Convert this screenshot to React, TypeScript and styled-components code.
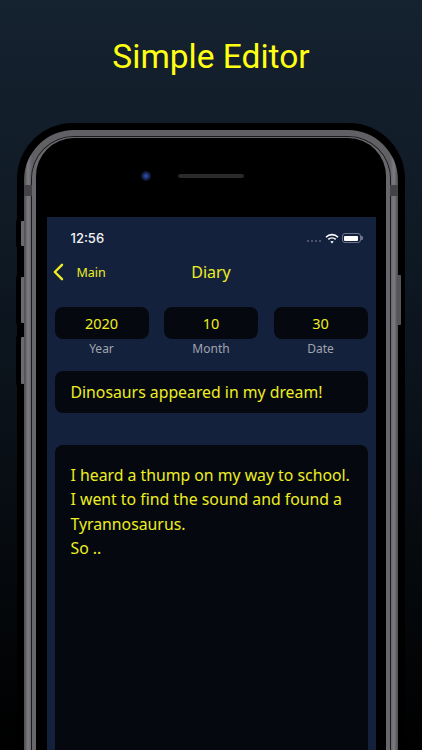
import styled, { createGlobalStyle } from "styled-components";

const lines = [
  "I heard a thump on my way to school.",
  "I went to find the sound and found a",
  "Tyrannosaurus.",
  "So ..",
];

const dateFields = [
  { value: "2020", label: "Year" },
  { value: "10", label: "Month" },
  { value: "30", label: "Date" },
];

const App = () => {
  return (
    <Page>
      <GlobalStyle />
      <Heading>Simple Editor</Heading>
      <Silhouette>
        <MuteSwitch />
        <VolumeUp />
        <VolumeDown />
        <PowerButton />
        <Steel>
          <AntennaLeft />
          <AntennaRight />
          <InnerRim>
            <Bezel>
              <TopSensors>
                <Camera />
                <Speaker />
              </TopSensors>
              <Screen>
                <StatusBar>
                  <Time>12:56</Time>
                  <StatusIcons>
                    <Signal>
                      <i />
                      <i />
                      <i />
                      <i />
                    </Signal>
                    <svg width="14" height="11" viewBox="0 0 14 11" fill="none" stroke="#fff">
                      <path d="M1 4.2C4.4 .8 9.6 .8 13 4.2" strokeWidth="1.6" />
                      <path d="M3.3 6.4C5.4 4.5 8.6 4.5 10.7 6.4" strokeWidth="1.6" />
                      <path d="M7 10.4 5.3 8.6C6.3 7.8 7.7 7.8 8.7 8.6Z" fill="#fff" stroke="none" />
                    </svg>
                    <Battery>
                      <BatteryFill />
                    </Battery>
                  </StatusIcons>
                </StatusBar>
                <NavBar>
                  <BackGroup>
                    <svg width="12" height="18" viewBox="0 0 12 18" fill="none">
                      <path d="M10 1.8 2.8 9l7.2 7.2" stroke="#eeee22" strokeWidth="2.4" strokeLinecap="round" strokeLinejoin="round" />
                    </svg>
                    <BackLabel>Main</BackLabel>
                  </BackGroup>
                  <NavTitle>Diary</NavTitle>
                </NavBar>
                <DateRow>
                  {dateFields.map((field) => (
                    <DateField key={field.label}>
                      <DateBox>{field.value}</DateBox>
                      <DateLabel>{field.label}</DateLabel>
                    </DateField>
                  ))}
                </DateRow>
                <TitleCard>Dinosaurs appeared in my dream!</TitleCard>
                <BodyCard>
                  {lines.map((line) => (
                    <BodyLine key={line}>{line}</BodyLine>
                  ))}
                </BodyCard>
              </Screen>
            </Bezel>
          </InnerRim>
        </Steel>
      </Silhouette>
    </Page>
  );
};

export default App;

const GlobalStyle = createGlobalStyle`
  html, body {
    margin: 0;
    padding: 0;
    background: #000;
  }
  * {
    box-sizing: border-box;
  }
`;

const Page = styled.div`
  width: 422px;
  height: 750px;
  overflow: hidden;
  display: flex;
  flex-direction: column;
  align-items: center;
  background: linear-gradient(180deg, #15222f 0%, #0f1a25 30%, #0a1119 55%, #030507 86%, #000 100%);
  font-family: "Noto Sans", sans-serif;
`;

const Heading = styled.h1`
  margin: 36px 0 0;
  height: 87px;
  font-family: Roboto, sans-serif;
  font-size: 33.5px;
  line-height: 42px;
  font-weight: 400;
  color: #ffff14;
  flex-shrink: 0;
`;

const Silhouette = styled.div`
  position: relative;
  width: 388px;
  flex-shrink: 0;
  padding: 7px 7px 0;
  background: #000;
  border-radius: 56px 56px 0 0;
`;

const Steel = styled.div`
  position: relative;
  padding: 7px 8px 0;
  background: linear-gradient(90deg, #4c4c50 0, #7c7c81 4px, #616165 8px, #616165 calc(100% - 8px), #7c7c81 calc(100% - 4px), #4c4c50 100%);
  border-radius: 50px 50px 0 0;
`;

const InnerRim = styled.div`
  height: 640px;
  border: solid #68686c;
  border-width: 1px 4px 0;
  border-radius: 42px 42px 0 0;
  box-shadow: 0 0 0 1px #1a1a1c;
`;

const Bezel = styled.div`
  height: 100%;
  display: flex;
  flex-direction: column;
  align-items: center;
  padding: 0 9px;
  background: #000;
  border-radius: 38px 38px 0 0;
`;

const TopSensors = styled.div`
  height: 80px;
  width: 100%;
  flex-shrink: 0;
  display: flex;
  align-items: center;
  justify-content: center;
  gap: 27px;
  padding: 0 37px 0 0;
  margin-top: -1px;
`;

const Camera = styled.div`
  width: 10px;
  height: 10px;
  margin-top: -2px;
  border-radius: 50%;
  background: radial-gradient(circle, #3557c0 0, #1f3478 30%, #10172e 60%, #0a0a10 100%);
`;

const Speaker = styled.div`
  width: 66px;
  height: 4px;
  margin-top: -2px;
  border-radius: 2px;
  background: #2a2a2b;
`;

const Screen = styled.div`
  width: 329px;
  flex: 1;
  padding: 0 8px;
  background: #14213d;
`;

const StatusBar = styled.div`
  height: 32px;
  display: flex;
  justify-content: space-between;
  align-items: flex-end;
  padding: 0 7px 0 16px;
`;

const Time = styled.span`
  font-size: 13px;
  line-height: 20px;
  font-weight: 500;
  margin-bottom: 1px;
  color: #f4f4f4;
  font-family: Inter, sans-serif;
`;

const StatusIcons = styled.div`
  display: flex;
  align-items: center;
  gap: 3px;
  height: 20px;
  margin-bottom: 1px;
`;

const Signal = styled.div`
  display: flex;
  gap: 2px;
  margin: 5px 1px 0 0;

  i {
    display: block;
    width: 2px;
    height: 2px;
    border-radius: 50%;
    background: #5c6478;
  }
`;

const Battery = styled.div`
  position: relative;
  width: 19px;
  height: 10px;
  padding: 1.5px;
  border: 1px solid #6c7488;
  border-radius: 3px;

  &::after {
    content: "";
    position: absolute;
    right: -3px;
    top: 2px;
    width: 1.5px;
    height: 4px;
    border-radius: 0 1px 1px 0;
    background: #6c7488;
  }
`;

const BatteryFill = styled.div`
  height: 100%;
  border-radius: 1px;
  background: #fff;
`;

const NavBar = styled.div`
  position: relative;
  height: 46px;
  display: flex;
  align-items: center;
  justify-content: center;
`;

const BackGroup = styled.div`
  position: absolute;
  left: -3px;
  top: 0;
  height: 100%;
  display: flex;
  align-items: center;
  gap: 13px;
`;

const BackLabel = styled.span`
  font-size: 12.5px;
  color: #eeee22;
`;

const NavTitle = styled.span`
  font-size: 16px;
  color: #eeee22;
  margin-top: -1px;
`;

const DateRow = styled.div`
  display: grid;
  grid-template-columns: repeat(3, 94px);
  justify-content: space-between;
  margin-top: 12px;
`;

const DateField = styled.div`
  display: flex;
  flex-direction: column;
  align-items: center;
`;

const DateBox = styled.div`
  width: 100%;
  height: 32px;
  display: flex;
  align-items: center;
  justify-content: center;
  font-size: 14.5px;
  color: #eeee22;
  background: #05090f;
  border-radius: 8px;
`;

const DateLabel = styled.div`
  margin-top: 1px;
  font-size: 12px;
  line-height: 18px;
  color: #a0a4ad;
`;

const TitleCard = styled.div`
  height: 42px;
  margin-top: 13px;
  padding: 0 16px;
  display: flex;
  align-items: center;
  font-size: 15.8px;
  color: #eeee22;
  background: #05090f;
  border-radius: 8px;
`;

const BodyCard = styled.div`
  height: 320px;
  margin-top: 32px;
  padding: 18px 16px;
  background: #05090f;
  border-radius: 8px;
`;

const BodyLine = styled.div`
  font-size: 15.8px;
  line-height: 24.4px;
  white-space: nowrap;
  color: #eeee22;
`;

const SideButton = styled.div`
  position: absolute;
  left: 4px;
  width: 3px;
  background: #6b6b70;
  border-radius: 1px 0 0 1px;
  box-shadow: -3px 0 0 2px #000;
`;

const MuteSwitch = styled(SideButton)`
  top: 98px;
  height: 25px;
`;

const VolumeUp = styled(SideButton)`
  top: 154px;
  height: 46px;
`;

const VolumeDown = styled(SideButton)`
  top: 214px;
  height: 47px;
`;

const PowerButton = styled.div`
  position: absolute;
  right: 4px;
  top: 152px;
  width: 3px;
  height: 50px;
  background: #55555a;
  border-radius: 0 1px 1px 0;
`;

const Antenna = styled.div`
  position: absolute;
  top: 55px;
  width: 8px;
  height: 11px;
  background: #434347;
`;

const AntennaLeft = styled(Antenna)`
  left: 0;
`;

const AntennaRight = styled(Antenna)`
  right: 0;
`;
